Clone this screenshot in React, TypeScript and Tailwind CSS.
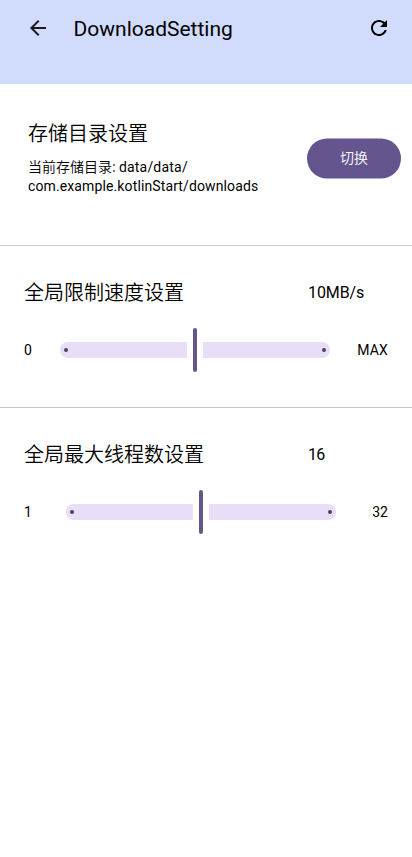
function BackIcon() {
  return (
    <svg viewBox="0 0 24 24" className="h-6 w-6 fill-[#1d1b20]">
      <path d="M20 11H7.83l5.59-5.59L12 4l-8 8 8 8 1.41-1.41L7.83 13H20v-2z" />
    </svg>
  );
}

function RefreshIcon() {
  return (
    <svg viewBox="0 0 24 24" className="h-6 w-6 fill-black">
      <path d="M17.65 6.35C16.2 4.9 14.21 4 12 4c-4.42 0-7.99 3.58-7.99 8s3.57 8 7.99 8c3.73 0 6.84-2.55 7.73-6h-2.08c-.82 2.33-3.04 4-5.65 4-3.31 0-6-2.69-6-6s2.69-6 6-6c1.66 0 3.14.69 4.22 1.78L13 11h7V4l-2.35 2.35z" />
    </svg>
  );
}

function Slider() {
  return (
    <div className="flex h-11 w-[270px] items-center gap-1.5">
      <div className="flex h-4 flex-1 items-center rounded-l-full rounded-r-[2px] bg-[#e8def8] pl-1">
        <span className="h-1 w-1 rounded-full bg-[#4a4458]" />
      </div>
      <div className="h-11 w-1 rounded-full bg-[#65558f]" />
      <div className="flex h-4 flex-1 items-center justify-end rounded-l-[2px] rounded-r-full bg-[#e8def8] pr-1">
        <span className="h-1 w-1 rounded-full bg-[#4a4458]" />
      </div>
    </div>
  );
}

export default function App() {
  return (
    <div className="h-[857px] w-[412px] overflow-hidden bg-white font-['Roboto','Noto_Sans_CJK_SC',sans-serif] text-black">
      <header className="flex h-[84px] items-start justify-between bg-[#d1dcfd] pt-4 pr-[21px] pl-[25.5px]">
        <div className="flex items-start">
          <BackIcon />
          <h1 className="ml-6 text-[21px] leading-[27px] whitespace-nowrap">DownloadSetting</h1>
        </div>
        <RefreshIcon />
      </header>

      <section className="flex h-[162px] items-start justify-between border-b border-[#c6c5d0] pr-[11px] pl-7">
        <div className="pt-[35px]">
          <h2 className="font-['Noto_Sans_CJK_SC',sans-serif] text-xl leading-7 font-[350]">存储目录设置</h2>
          <p className="mt-2.5 text-sm leading-[19px] whitespace-nowrap">
            <span className="font-['Noto_Sans_CJK_SC',sans-serif] font-[350]">当前存储目录: </span>
            <span className="tracking-[0.2px]">data/data/</span>
            <br />
            <span className="tracking-[0.12px]">com.example.kotlinStart/downloads</span>
          </p>
        </div>
        <button className="mt-[54px] h-10 w-[94px] translate-y-[0.5px] rounded-full bg-[#65558f] pb-0.5 text-sm font-[350] text-white">切换</button>
      </section>

      <section className="h-[162px] border-b border-[#c6c5d0] px-6 pt-8">
        <div className="flex h-7 items-center">
          <h2 className="w-[284px] font-['Noto_Sans_CJK_SC',sans-serif] text-xl leading-7 font-[350]">全局限制速度设置</h2>
          <span className="pt-0.5 text-base tracking-[-0.1px]">10MB/s</span>
        </div>
        <div className="mt-[22px] flex items-center">
          <span className="w-9 text-sm">0</span>
          <Slider />
          <span className="flex-1 text-right text-sm tracking-[0.2px]">MAX</span>
        </div>
      </section>

      <section className="px-6 pt-8">
        <div className="flex h-7 items-center">
          <h2 className="w-[284px] font-['Noto_Sans_CJK_SC',sans-serif] text-xl leading-7 font-[350]">全局最大线程数设置</h2>
          <span className="pt-0.5 text-base tracking-[-0.8px]">16</span>
        </div>
        <div className="mt-[22px] flex items-center">
          <span className="w-[42px] text-sm">1</span>
          <Slider />
          <span className="flex-1 text-right text-sm">32</span>
        </div>
      </section>
    </div>
  );
}
